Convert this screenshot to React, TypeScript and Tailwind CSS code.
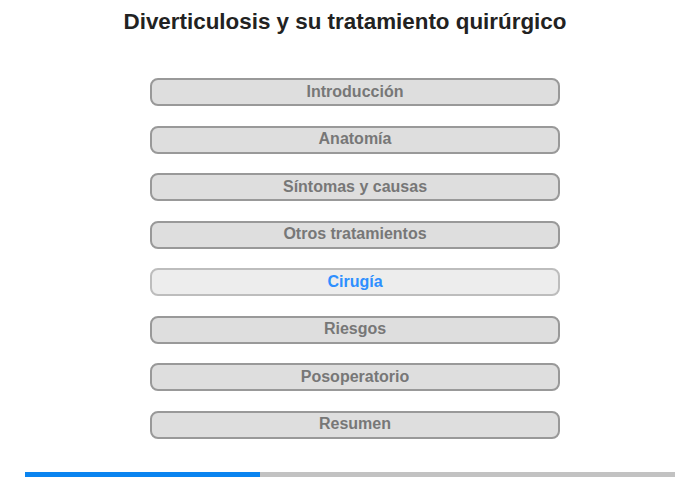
const sections = [
  "Introducción",
  "Anatomía",
  "Síntomas y causas",
  "Otros tratamientos",
  "Cirugía",
  "Riesgos",
  "Posoperatorio",
  "Resumen",
];

const active = "Cirugía";

export default function App() {
  return (
    <div className="w-[700px] h-[480px] bg-white font-['Liberation_Sans',Arial,sans-serif] flex flex-col items-center">
      <h1 className="mt-[9px] mr-[10px] text-[22.4px] leading-[26px] font-bold text-[#222]">
        Diverticulosis y su tratamiento quirúrgico
      </h1>

      <div className="mt-[43px] ml-[10px] flex flex-col gap-[19.5px]">
        {sections.map((s) =>
          s === active ? (
            <button
              key={s}
              className="w-[410px] h-[28px] pb-[1px] rounded-[8px] border-2 border-[#bdbdbd] bg-[#ededed] text-[16px] font-bold text-[#2e8fff] leading-none"
            >
              {s}
            </button>
          ) : (
            <button
              key={s}
              className="w-[410px] h-[28px] pb-[1px] rounded-[8px] border-2 border-[#999] bg-[#dedede] text-[16px] font-bold text-[#777] leading-none"
            >
              {s}
            </button>
          )
        )}
      </div>

      <div className="mt-[33px] w-[650px] h-[5px] flex bg-[#c2c2c2]">
        <div className="w-[235px] h-full bg-[#0a84f0]" />
      </div>
    </div>
  );
}
